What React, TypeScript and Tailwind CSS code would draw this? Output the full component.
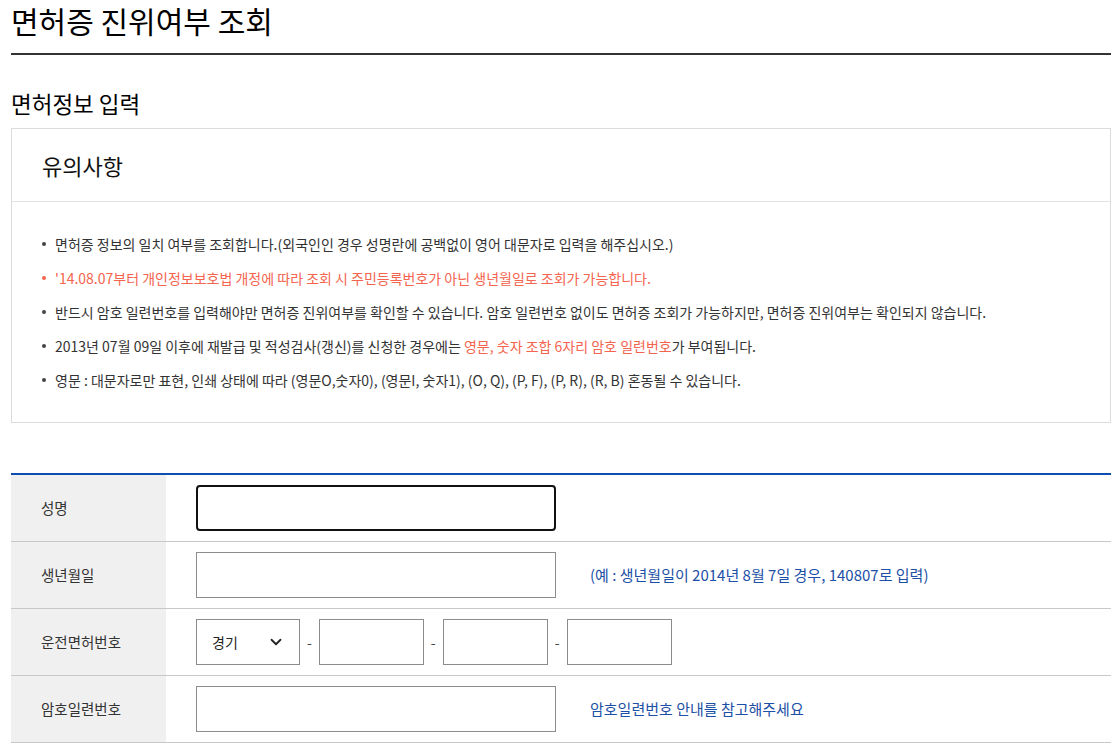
import { ChevronDown } from 'lucide-react';

const notices = [
  {
    key: 'n1',
    body: <>면허증 정보의 일치 여부를 조회합니다.(외국인인 경우 성명란에 공백없이 영어 대문자로 입력을 해주십시오.)</>,
    red: false,
  },
  {
    key: 'n2',
    body: <>'14.08.07부터 개인정보보호법 개정에 따라 조회 시 주민등록번호가 아닌 생년월일로 조회가 가능합니다.</>,
    red: true,
  },
  {
    key: 'n3',
    body: (
      <>
        반드시 암호 일련번호를 입력해야만 면허증 진위여부를 확인할 수 있습니다. 암호 일련번호 없이도 면허증 조회가 가능하지만, 면허증 진위여부는 확인되지 않습니다.
      </>
    ),
    red: false,
  },
  {
    key: 'n4',
    body: (
      <>
        2013년 07월 09일 이후에 재발급 및 적성검사(갱신)를 신청한 경우에는{' '}
        <span className="text-[#f4644e]">영문, 숫자 조합 6자리 암호 일련번호</span>가 부여됩니다.
      </>
    ),
    red: false,
  },
  {
    key: 'n5',
    body: <>영문 : 대문자로만 표현, 인쇄 상태에 따라 (영문O,숫자0), (영문I, 숫자1), (O, Q), (P, F), (P, R), (R, B) 혼동될 수 있습니다.</>,
    red: false,
  },
];

function FormRow({ label, children }: { label: string; children: React.ReactNode }) {
  return (
    <div className="flex border-b border-[#c8c8c8]">
      <div className="w-[155px] shrink-0 bg-[#f0f0f0] pl-[30px] flex items-center text-[14.5px] text-[#333]">
        {label}
      </div>
      <div className="flex-1 h-[66px] pl-[30px] flex items-center">{children}</div>
    </div>
  );
}

const boxInput = 'h-[46px] border border-[#8c8c8c] bg-white';

export default function App() {
  return (
    <div
      className="min-h-screen bg-white pl-[11px] text-[#222]"
      style={{ fontFamily: "'Noto Sans CJK KR', 'Noto Sans', sans-serif" }}
    >
      <div className="w-[1100px]">
        {/* Page title */}
        <h1 className="text-[30px] leading-[40px] text-black pt-0 pb-[13px] border-b-2 border-[#333]">
          면허증 진위여부 조회
        </h1>

        <h2 className="mt-[33px] mb-[10px] text-[22.5px] leading-[30px] text-black">면허정보 입력</h2>

        {/* Notice box */}
        <div className="border border-[#dcdcdc]">
          <div className="h-[73px] flex items-center px-[30px] border-b border-[#e2e2e2] text-[22px] text-[#111]">
            유의사항
          </div>
          <ul className="pt-[25px] pb-[25px] pl-[30px] pr-[20px]">
            {notices.map((n) => (
              <li
                key={n.key}
                className={`flex items-center h-[34px] text-[14px] ${
                  n.red ? 'text-[#f4644e]' : 'text-[#333]'
                }`}
              >
                <span
                  className={`w-[4px] h-[4px] rounded-full mr-[9px] shrink-0 ${
                    n.red ? 'bg-[#f4644e]' : 'bg-[#444]'
                  }`}
                />
                <span>{n.body}</span>
              </li>
            ))}
          </ul>
        </div>

        {/* Form table */}
        <div className="mt-[50px] border-t-2 border-[#0c4fb0]">
          <FormRow label="성명">
            <div className="w-[360px] h-[46px] border-2 border-[#111] rounded-[4px] bg-white" />
          </FormRow>
          <FormRow label="생년월일">
            <div className={`w-[360px] ${boxInput}`} />
            <span className="ml-[34px] text-[15px] text-[#1c4fa6]">
              (예 : 생년월일이 2014년 8월 7일 경우, 140807로 입력)
            </span>
          </FormRow>
          <FormRow label="운전면허번호">
            <div className="flex items-center gap-[7px]">
              <div className={`w-[104px] ${boxInput} flex items-center justify-between pl-[15px] pr-[14px]`}>
                <span className="text-[14px] text-[#222]">경기</span>
                <ChevronDown size={18} strokeWidth={2.4} className="text-[#222]" />
              </div>
              <span className="text-[14px] text-[#444]">-</span>
              <div className={`w-[105px] ${boxInput}`} />
              <span className="text-[14px] text-[#444]">-</span>
              <div className={`w-[105px] ${boxInput}`} />
              <span className="text-[14px] text-[#444]">-</span>
              <div className={`w-[105px] ${boxInput}`} />
            </div>
          </FormRow>
          <FormRow label="암호일련번호">
            <div className={`w-[360px] ${boxInput}`} />
            <span className="ml-[34px] text-[15px] text-[#1c4fa6]">
              암호일련번호 안내를 참고해주세요
            </span>
          </FormRow>
        </div>
      </div>
    </div>
  );
}
